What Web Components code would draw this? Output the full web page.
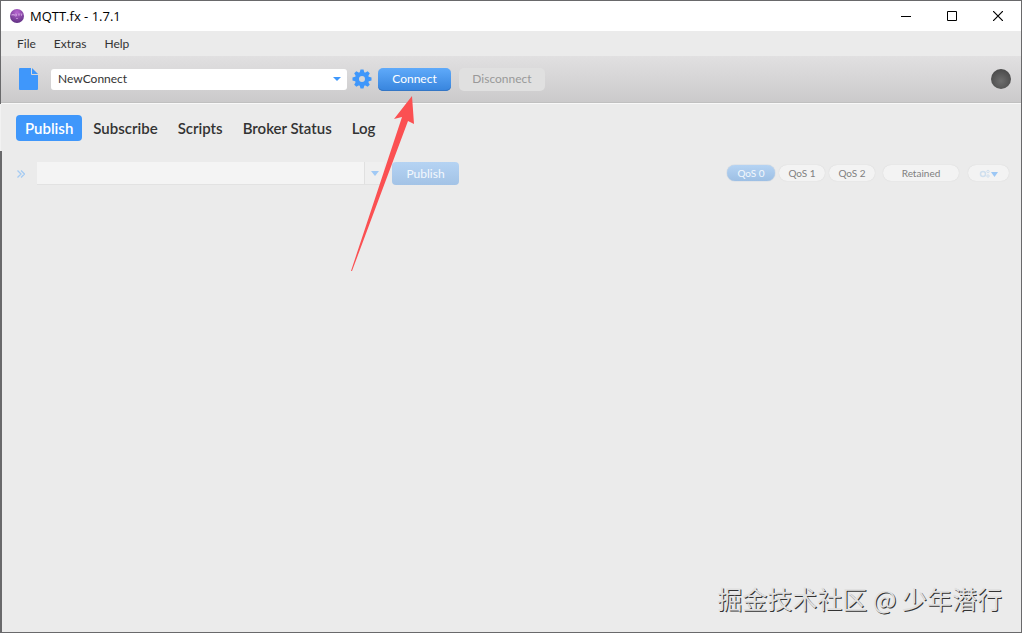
<!DOCTYPE html>
<html lang="en">
<head>
<meta charset="utf-8">
<title>MQTT.fx - 1.7.1</title>
<style>
  body {
    margin: 0;
    background: #ebebeb;
    color: #333;
    font: 12px/16px Lato, "Liberation Sans", sans-serif;
  }
</style>
</head>
<body>
<fx-window>
  <fx-titlebar slot="top" label="MQTT.fx - 1.7.1"></fx-titlebar>
  <fx-menubar slot="top" items="File,Extras,Help"></fx-menubar>
  <fx-toolbar slot="top"></fx-toolbar>
  <fx-tabs items="Publish,Subscribe,Scripts,Broker Status,Log"></fx-tabs>
  <fx-publish></fx-publish>
  <fx-watermark>掘金技术社区 @ 少年潜行</fx-watermark>
  <fx-arrow></fx-arrow>
</fx-window>

<script>
class FxElement extends HTMLElement {
  constructor() {
    super();
    this.attachShadow({ mode: 'open' });
  }

  get items() {
    return (this.getAttribute('items') || '').split(',');
  }

  connectedCallback() {
    const template = document.createElement('template');
    template.innerHTML = `
      <style>
        * { box-sizing: border-box; }
        button, input, select { font: inherit; color: inherit; margin: 0; }
        button { border: 0; padding: 0; background: none; }
        svg { display: block; flex: none; }
        ${this.getStyles()}
      </style>
      ${this.getTemplate()}
    `;
    this.shadowRoot.append(template.content.cloneNode(true));
  }
}

class FxWindow extends FxElement {
  getTemplate() {
    return `
      <header><slot name="top"></slot></header>
      <main><slot></slot></main>
    `;
  }

  getStyles() {
    return `
      :host {
        box-sizing: border-box;
        display: flex;
        flex-direction: column;
        min-height: 100vh;
        border: 1px solid #69696b;
      }
      main {
        flex: 1;
        display: flex;
        flex-direction: column;
        border-top: 1px solid #f8f8f8;
      }
    `;
  }
}

class FxTitlebar extends FxElement {
  getTemplate() {
    return `
      <svg width="14" height="14" viewBox="0 0 14 14">
        <defs>
          <radialGradient id="ball" cx=".5" cy=".25" r=".75">
            <stop offset="0" stop-color="#b966d2"/>
            <stop offset="1" stop-color="#603083"/>
          </radialGradient>
        </defs>
        <circle cx="7" cy="7" r="7" fill="url(#ball)"/>
        <path d="M2 7V5l1 1 1-1v2M5 5h1.500v2H5zM8 5h2M9 5v2M10.500 5h2M11.500 5v2M6 9.500h2" fill="none" stroke="#dcb4ea" stroke-width=".6"/>
      </svg>
      <h1>${this.getAttribute('label')}</h1>
      <div>
        <button aria-label="Minimize"><svg width="10" height="10"><path d="M0 5.500h10" stroke="#000"/></svg></button>
        <button aria-label="Maximize"><svg width="10" height="10"><path d="M.5.5h9v9h-9z" fill="none" stroke="#000"/></svg></button>
        <button aria-label="Close"><svg width="10" height="10"><path d="M0 0l10 10M10 0L0 10" stroke="#000" stroke-width="1.200"/></svg></button>
      </div>
    `;
  }

  getStyles() {
    return `
      :host {
        display: flex;
        align-items: center;
        height: 30px;
        padding-left: 9px;
        gap: 6px;
        background: #fff;
        color: #000;
      }
      h1 { flex: 1; margin: 0; font: 13px/16px "Open Sans", sans-serif; }
      div { display: flex; }
      button { display: grid; place-items: center; width: 46px; height: 30px; }
    `;
  }
}

class FxMenubar extends FxElement {
  getTemplate() {
    return this.items.map(item => `<button role="menuitem">${item}</button>`).join('');
  }

  getStyles() {
    return `
      :host {
        display: flex;
        align-items: center;
        gap: 18px;
        height: 25px;
        padding-left: 16px;
        background: #ebebeb;
      }
    `;
  }
}

class FxToolbar extends FxElement {
  getTemplate() {
    const teeth = [0, 45, 90, 135, 180, 225, 270, 315]
      .map(a => `<path d="M7.500 4l1-3.500h3l1 3.500z" transform="rotate(${a} 10 10)"/>`).join('');
    return `
      <button aria-label="New profile">
        <svg width="19" height="22" viewBox="0 0 19 22" fill="#3f97fb">
          <path d="M1 0h11v6q0 1 1 1h6v14q0 1-1 1H1q-1 0-1-1V1q0-1 1-1z"/>
          <path d="M13 0l6 6h-6z"/>
        </svg>
      </button>
      <span class="combo">
        <select aria-label="Connection profile"><option>NewConnect</option></select>
        <svg width="8" height="4"><path d="M0 0h8L4 4z" fill="#3f97fb"/></svg>
      </span>
      <button class="gear" aria-label="Edit profiles">
        <svg width="20" height="20" viewBox="0 0 20 20" fill="#3f97fb">
          ${teeth}
          <circle cx="10" cy="10" r="5" fill="none" stroke="#3f97fb" stroke-width="4"/>
        </svg>
      </button>
      <button class="btn primary">Connect</button>
      <button class="btn" disabled>Disconnect</button>
      <i role="img" aria-label="Offline"></i>
    `;
  }

  getStyles() {
    return `
      :host {
        display: flex;
        align-items: center;
        height: 46px;
        padding: 0 10px 0 18px;
        background: linear-gradient(#e1e0e1, #cbcacb);
        border-bottom: 1px solid #c0c0c0;
      }
      .combo { display: grid; align-items: center; width: 296px; margin: 0 5px 0 13px; }
      .combo > * { grid-area: 1 / 1; }
      .combo svg { justify-self: end; margin-right: 6px; }
      select {
        appearance: none;
        width: 100%;
        height: 21px;
        padding: 0 7px;
        border: 0;
        border-radius: 3px;
        background: #fff;
      }
      .gear { margin-right: 6px; }
      .btn { width: 86px; height: 23px; border-radius: 5px; background: #e0e0e0; color: #999; }
      .primary {
        width: 73px;
        margin-right: 8px;
        background: linear-gradient(#5faafa, #3784dd);
        box-shadow: inset 0 -1px #3476c5;
        color: #fff;
      }
      i {
        width: 20px;
        height: 20px;
        margin-left: auto;
        border-radius: 50%;
        background: radial-gradient(circle at 50% 60%, #6e6e6e, #3f3f3f);
      }
    `;
  }
}

class FxTabs extends FxElement {
  getTemplate() {
    return this.items.map((item, i) =>
      `<button role="tab" aria-selected="${i === 0}">${item}</button>`).join('');
  }

  getStyles() {
    return `
      :host {
        display: flex;
        gap: 2px;
        height: 47px;
        box-sizing: border-box;
        margin-left: -1px;
        padding: 11px 15px 0;
        border-left: 1px solid #f2f2f2;
      }
      button { height: 26px; padding: 0 9px; border-radius: 4px; font: 600 15px/20px Lato, sans-serif; }
      button[aria-selected="true"] { background: #3f97fb; color: #fff; }
    `;
  }
}

class FxPublish extends FxElement {
  getTemplate() {
    return `
      <button class="more" aria-label="Show history">
        <svg width="8" height="8"><path d="M.5.500L4 4 .5 7.500M4 .500L7.500 4 4 7.500" fill="none" stroke="#a5cbf3" stroke-width="1.300"/></svg>
      </button>
      <div class="topic">
        <input aria-label="Topic" disabled>
        <button aria-label="Recent topics" disabled><svg width="8" height="5"><path d="M0 0h8L4 5z" fill="#a0c9f5"/></svg></button>
      </div>
      <button class="publish" disabled>Publish</button>
      <div class="options">
        <label><input type="radio" name="qos" checked disabled>QoS 0</label>
        <label><input type="radio" name="qos" disabled>QoS 1</label>
        <label><input type="radio" name="qos" disabled>QoS 2</label>
        <button class="retained" disabled>Retained</button>
        <button class="settings" aria-label="Options" disabled>
          <svg width="19" height="9" viewBox="0 0 19 9">
            <circle cx="4" cy="5" r="2.500" fill="none" stroke="#cfdfee" stroke-width="1.500"/>
            <circle cx="9" cy="2.500" r="1.200" fill="none" stroke="#cfdfee"/>
            <circle cx="9" cy="7" r="1.200" fill="none" stroke="#cfdfee"/>
            <path d="M12 3h7l-3.500 5z" fill="#9cc7f5"/>
          </svg>
        </button>
      </div>
    `;
  }

  getStyles() {
    return `
      :host {
        flex: 1;
        display: flex;
        align-items: flex-start;
        padding: 11px 12px 0 15px;
        border-left: 1px solid #69696b;
      }
      .more { display: grid; align-items: center; height: 23px; width: 20px; }
      .topic { display: flex; width: 347px; height: 22px; margin-right: 8px; box-shadow: 0 1px #e2e2e2; }
      .topic input { flex: 1; min-width: 0; border: 0; background: #f4f4f4; }
      .topic button {
        display: grid;
        place-items: center;
        width: 20px;
        border-left: 1px solid #e0e0e0;
        background: #efefef;
      }
      .publish {
        height: 23px;
        width: 67px;
        border-radius: 4px;
        background: linear-gradient(#b5d3f3, #a3c3e6);
        color: #f3f8fd;
      }
      .options { display: flex; gap: 4px; margin: 3px 0 0 auto; font-size: 10px; color: #808080; }
      .options label, .options button {
        display: grid;
        place-items: center;
        height: 16px;
        width: 46px;
        border-radius: 8px;
        background: #f3f3f3;
        box-shadow: 0 0 1px #ccc;
      }
      label input { position: absolute; appearance: none; }
      .options label:has(:checked) {
        width: 48px;
        background: linear-gradient(#b5d3f3, #9dbfe4);
        box-shadow: 0 0 1px #7b9cc0;
        color: #f3f8fd;
      }
      .options .retained { width: 76px; margin: 0 5px 0 4px; }
      .options .settings { width: 41px; }
    `;
  }
}

class FxWatermark extends FxElement {
  getTemplate() {
    return `<slot></slot>`;
  }

  getStyles() {
    return `
      :host {
        padding: 0 19px 17px;
        border-left: 1px solid #69696b;
        text-align: right;
        font: 25px/34px "Noto Sans CJK SC", sans-serif;
        color: #e0e0e0;
        text-shadow: 1px 1px #333;
      }
    `;
  }
}

// Red pointer drawn over the window, aimed at the Connect button
class FxArrow extends FxElement {
  getTemplate() {
    return `
      <svg width="64" height="176" viewBox="0 0 64 176">
        <path d="M61 0L43 23l8-2L0 175h1L57 25l6 3z" fill="#fb5052"/>
      </svg>
    `;
  }

  getStyles() {
    return `:host { position: absolute; left: 351px; top: 96px; pointer-events: none; }`;
  }
}

customElements.define('fx-window', FxWindow);
customElements.define('fx-titlebar', FxTitlebar);
customElements.define('fx-menubar', FxMenubar);
customElements.define('fx-toolbar', FxToolbar);
customElements.define('fx-tabs', FxTabs);
customElements.define('fx-publish', FxPublish);
customElements.define('fx-watermark', FxWatermark);
customElements.define('fx-arrow', FxArrow);
</script>
</body>
</html>
